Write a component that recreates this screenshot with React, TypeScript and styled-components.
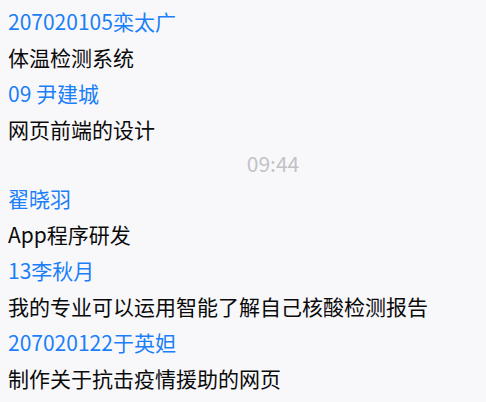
import styled, { createGlobalStyle } from "styled-components";

interface Message {
  name: string;
  text: string;
}

const GlobalStyle = createGlobalStyle`
  html, body {
    margin: 0;
    padding: 0;
    background: #f8f8fb;
  }
  body {
    font-family: "Noto Sans CJK SC", "Noto Sans", sans-serif;
  }
`;

const FIRST: Message[] = [
  { name: "207020105栾太广", text: "体温检测系统" },
  { name: "09 尹建城", text: "网页前端的设计" },
];

const SECOND: Message[] = [
  { name: "翟晓羽", text: "App程序研发" },
  { name: "13李秋月", text: "我的专业可以运用智能了解自己核酸检测报告" },
  { name: "207020122于英妲", text: "制作关于抗击疫情援助的网页" },
];

export default function App() {
  return (
    <>
      <GlobalStyle />
      <Chat>
        {FIRST.map((m) => (
          <Item key={m.name}>
            <Name>{m.name}</Name>
            <Text>{m.text}</Text>
          </Item>
        ))}
        <Time>09:44</Time>
        {SECOND.map((m) => (
          <Item key={m.name}>
            <Name>{m.name}</Name>
            <Text>{m.text}</Text>
          </Item>
        ))}
      </Chat>
    </>
  );
}

const Chat = styled.div`
  width: 486px;
  height: 402px;
  overflow: hidden;
  padding: 3px 8px 0;
  box-sizing: border-box;
  display: flex;
  flex-direction: column;
`;

const Item = styled.div`
  display: flex;
  flex-direction: column;
`;

const Name = styled.div`
  font-size: 21px;
  line-height: 36px;
  color: #1a7ff8;
  white-space: nowrap;
`;

const Text = styled.div`
  font-size: 21px;
  line-height: 36px;
  color: #0a0a0a;
  white-space: nowrap;
`;

const Time = styled.div`
  font-size: 21px;
  line-height: 33px;
  color: #c2c2c6;
  text-align: center;
  padding-left: 60px;
`;
